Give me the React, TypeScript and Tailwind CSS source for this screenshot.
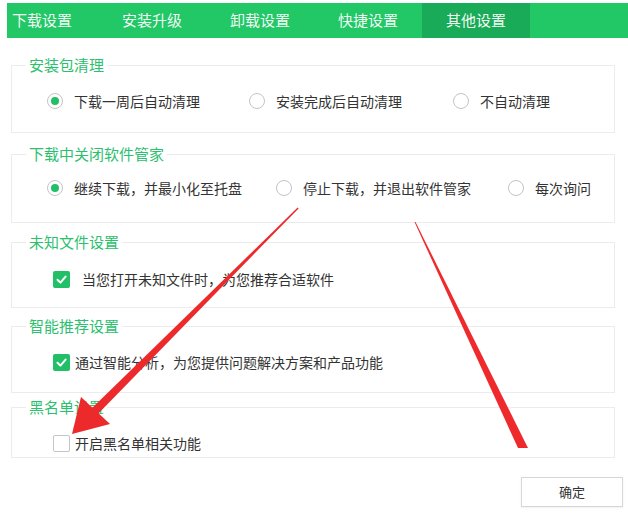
import React from 'react';

const FONT = { fontFamily: '"Noto Sans CJK SC", "Noto Sans", sans-serif' };

const tabs = ['下载设置', '安装升级', '卸载设置', '快捷设置', '其他设置'];

function Radio({ checked, label, className = '' }: { checked?: boolean; label: string; className?: string }) {
  return (
    <div className={`flex items-center gap-[11px] ${className}`}>
      <span className="w-[16px] h-[16px] rounded-full border border-[#c4c4c4] bg-white flex items-center justify-center shrink-0">
        {checked && <span className="w-[8px] h-[8px] rounded-full bg-[#22bf69]" />}
      </span>
      <span className="text-[14px] leading-[20px] text-[#333] whitespace-nowrap">{label}</span>
    </div>
  );
}

function Check({ checked, label, gap }: { checked?: boolean; label: string; gap: string }) {
  return (
    <div className={`flex items-center ${gap}`}>
      {checked ? (
        <span className="w-[17px] h-[17px] rounded-[2px] bg-[#22bf69] flex items-center justify-center shrink-0">
          <svg width="13" height="13" viewBox="0 0 13 13">
            <polyline points="2.5,6.8 5.4,9.6 10.6,3.6" fill="none" stroke="#fff" strokeWidth="2" strokeLinecap="round" strokeLinejoin="round" />
          </svg>
        </span>
      ) : (
        <span className="w-[17px] h-[17px] rounded-[2px] border border-[#c5c5c5] bg-white shrink-0" />
      )}
      <span className="text-[14px] leading-[20px] text-[#333] whitespace-nowrap">{label}</span>
    </div>
  );
}

function Group({ title, className, children }: { title: string; className: string; children: React.ReactNode }) {
  return (
    <fieldset className={`ml-[11px] mr-[13px] border border-[#ececec] ${className}`}>
      <legend className="ml-[14px] px-[3px] text-[15px] leading-[20px] text-[#2cbf6e]">{title}</legend>
      {children}
    </fieldset>
  );
}

export default function App() {
  return (
    <div className="relative w-[628px] h-[516px] bg-white overflow-hidden" style={FONT}>
      {/* tab bar */}
      <div className="pt-[3px] pl-[7px]">
        <div className="flex h-[35px] bg-[#22c766]">
          {tabs.map((t, i) => (
            <div
              key={t}
              className={`flex items-center text-[15px] text-white/95 ${i === 0 ? 'w-[91px] pl-[5px]' : 'w-[108px] justify-center'} ${i === 4 ? 'bg-[#1aab58]' : ''}`}
            >
              {t}
            </div>
          ))}
        </div>
      </div>

      <Group title="安装包清理" className="mt-[17px] pt-[16px] pb-[21px]">
        <div className="flex pl-[35px]">
          <Radio checked label="下载一周后自动清理" />
          <Radio label="安装完成后自动清理" className="ml-[49px]" />
          <Radio label="不自动清理" className="ml-[51px]" />
        </div>
      </Group>

      <Group title="下载中关闭软件管家" className="mt-[11px] pt-[14px] pb-[24px]">
        <div className="flex pl-[35px]">
          <Radio checked label="继续下载，并最小化至托盘" />
          <Radio label="停止下载，并退出软件管家" className="ml-[34px]" />
          <Radio label="每次询问" className="ml-[37px]" />
        </div>
      </Group>

      <Group title="未知文件设置" className="mt-[9px] pt-[17px] pb-[18px]">
        <div className="pl-[41px]">
          <Check checked label="当您打开未知文件时，为您推荐合适软件" gap="gap-[12px]" />
        </div>
      </Group>

      <Group title="智能推荐设置" className="mt-[8px] pt-[16px] pb-[20px]">
        <div className="pl-[41px]">
          <Check checked label="通过智能分析，为您提供问题解决方案和产品功能" gap="gap-[5px]" />
        </div>
      </Group>

      <Group title="黑名单设置" className="mt-[4px] pt-[16px] pb-[4px]">
        <div className="pl-[41px]">
          <Check label="开启黑名单相关功能" gap="gap-[5px]" />
        </div>
      </Group>

      <div className="flex justify-end mt-[19px] pr-[5px]">
        <button className="w-[102px] h-[30px] border border-[#d6d6d6] bg-white text-[13px] text-[#333] shadow-[0_1px_2px_rgba(0,0,0,0.06)]">
          确定
        </button>
      </div>

      {/* red annotation arrows */}
      <svg className="absolute inset-0 pointer-events-none" width="628" height="516" viewBox="0 0 628 516">
        <polygon points="297.6,207.6 298.6,208.4 97.4,414.4 91.6,408.6" fill="#ec2a2c" />
        <polygon points="72,434 81,397 110,424" fill="#ec2a2c" />
        <polygon points="414.5,222 415.5,222 528,448 518,448" fill="#ee2a2c" />
      </svg>
    </div>
  );
}
